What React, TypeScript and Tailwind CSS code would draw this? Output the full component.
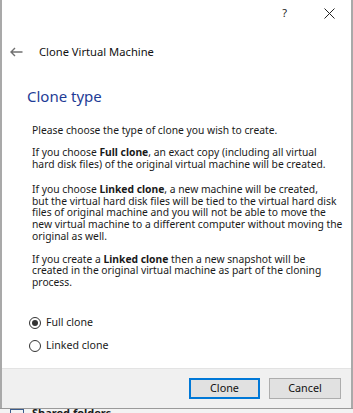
import React, { useState } from "react";

const Radio = ({ checked, label, onClick }: { checked: boolean; label: string; onClick: () => void }) => (
  <button type="button" onClick={onClick} className="flex items-center gap-[5px] h-[14px]">
    <span className="w-[12px] h-[12px] rounded-full border border-[#333] bg-white flex items-center justify-center">
      {checked && <span className="w-[6px] h-[6px] rounded-full bg-[#333]" />}
    </span>
    <span className="text-[10.6px] text-[#1a1a1a]">{label}</span>
  </button>
);

export default function App() {
  const [mode, setMode] = useState("full");

  return (
    <div className="w-[353px] h-[413px] overflow-hidden bg-[#f3f3f3] font-['Noto_Sans',sans-serif] text-[#1a1a1a]">
      <div className="h-[408px] bg-white border-l-2 border-r-2 border-[#a9a9a9] flex flex-col">
        {/* title bar */}
        <div className="h-[27px] flex items-center justify-end">
          <span className="text-[11px] text-[#222] mr-[37px]">?</span>
          <svg width="11" height="11" viewBox="0 0 11 11" className="mr-[16px]">
            <path d="M0.5 0.5 L10.5 10.5 M10.5 0.5 L0.5 10.5" stroke="#222" strokeWidth="1" />
          </svg>
        </div>

        {/* header */}
        <div className="h-[50px] flex items-center">
          <svg width="13" height="10" viewBox="0 0 13 10" className="ml-[8px]">
            <path d="M1 5 H12.5 M5 1 L1 5 L5 9" stroke="#707070" strokeWidth="1.4" fill="none" />
          </svg>
          <span className="ml-[16px] text-[11.2px] text-[#111]">Clone Virtual Machine</span>
        </div>

        {/* content */}
        <div className="flex-1 flex flex-col">
          <h1 className="mt-[9px] ml-[25px] text-[15px] leading-[20px] text-[#1e3c96]">Clone type</h1>
          <div className="ml-[30px] mt-[19px] text-[10.3px] leading-[11.6px] whitespace-nowrap flex flex-col">
            <p>Please choose the type of clone you wish to create.</p>
            <p className="mt-[10.5px]">
              If you choose <b>Full clone</b>, an exact copy (including all virtual
              <br />
              hard disk files) of the original virtual machine will be created.
            </p>
            <p className="mt-[14px]">
              If you choose <b>Linked clone</b>, a new machine will be created,
              <br />
              but the virtual hard disk files will be tied to the virtual hard disk
              <br />
              files of original machine and you will not be able to move the
              <br />
              new virtual machine to a different computer without moving the
              <br />
              original as well.
            </p>
            <p className="mt-[11.5px]">
              If you create a <b>Linked clone</b> then a new snapshot will be
              <br />
              created in the original virtual machine as part of the cloning
              <br />
              process.
            </p>
          </div>
          <div className="ml-[27px] mt-[27px] flex flex-col gap-[9px]">
            <Radio checked={mode === "full"} label="Full clone" onClick={() => setMode("full")} />
            <Radio checked={mode === "linked"} label="Linked clone" onClick={() => setMode("linked")} />
          </div>
        </div>

        {/* footer */}
        <div className="h-[40px] bg-[#f0f0f0] border-t border-[#e3e3e3] flex items-start justify-end gap-[9px] pt-[9px] pr-[10px]">
          <button className="w-[71px] h-[21px] bg-[#e1e1e1] border-2 border-[#0078d7] text-[10.8px] text-[#111]">
            Clone
          </button>
          <button className="w-[72px] h-[21px] bg-[#e1e1e1] border border-[#adadad] text-[10.8px] text-[#111]">
            Cancel
          </button>
        </div>
      </div>
      <div className="h-[1px] bg-[#9a9a9a]" />
      <div className="flex items-start gap-[8px] pl-[10px]">
        <span className="w-[14px] h-[4px] border border-b-0 border-[#3a5b8c]" />
        <span className="text-[11px] font-bold leading-[4px] pt-[2px]">Shared folders</span>
      </div>
    </div>
  );
}
